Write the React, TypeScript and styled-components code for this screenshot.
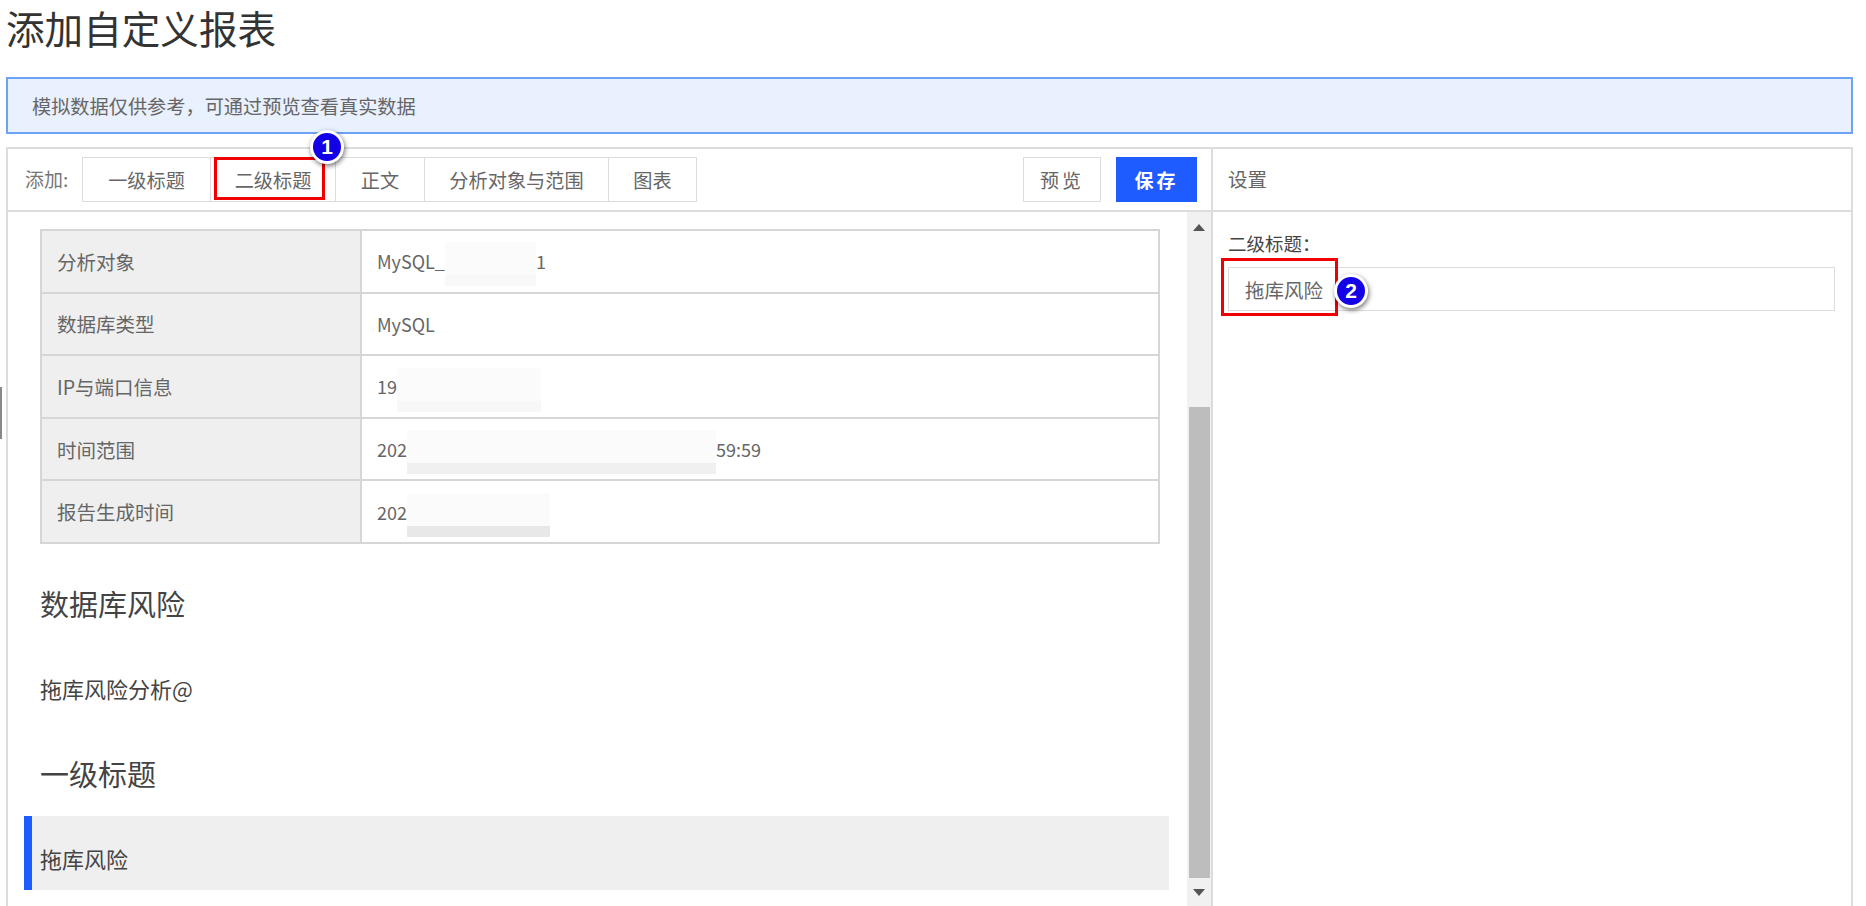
import styled, { createGlobalStyle } from "styled-components";

const GlobalStyle = createGlobalStyle`
  html, body {
    margin: 0;
    height: 906px;
    overflow: hidden;
    background: #fff;
    font-family: "Noto Sans CJK SC", "Noto Sans", sans-serif;
    color: #666;
  }
  * { box-sizing: border-box; }
`;

const Page = styled.div`
  position: relative;
  height: 906px;
  padding: 0 13px 0 6px;
  display: flex;
  flex-direction: column;
`;

const EdgeHandle = styled.div`
  position: absolute;
  left: 0;
  top: 387px;
  width: 2px;
  height: 52px;
  background: #888;
`;

const Title = styled.h1`
  margin: 0;
  height: 77px;
  padding-top: 1px;
  font-size: 38.6px;
  line-height: 52px;
  font-weight: 400;
  color: #333;
`;

const Notice = styled.div`
  height: 57px;
  padding-left: 24px;
  display: flex;
  align-items: center;
  background: #e9f0fe;
  border: 2px solid #6ea2f5;
  font-size: 19.2px;
  color: #666;
`;

const Panel = styled.div`
  margin-top: 13px;
  flex: 1;
  min-height: 0;
  display: grid;
  grid-template-columns: 1205px 1fr;
  border: 2px solid #dcdcdc;
  border-bottom: none;
`;

const Editor = styled.section`
  display: flex;
  flex-direction: column;
  min-height: 0;
  border-right: 2px solid #dcdcdc;
`;

const Toolbar = styled.div`
  height: 63px;
  flex: none;
  padding: 8px 14px 0 17px;
  display: flex;
  align-items: flex-start;
  border-bottom: 2px solid #dcdcdc;
`;

const AddLabel = styled.span`
  width: 57px;
  height: 45px;
  line-height: 44px;
  font-size: 19px;
  color: #777;
`;

const AddGroup = styled.div`
  display: flex;
  height: 45px;
  border: 1.5px solid #dcdcdc;
`;

const AddButton = styled.div<{ $width: number }>`
  position: relative;
  width: ${(p) => p.$width}px;
  display: flex;
  align-items: center;
  justify-content: center;
  font-size: 19.2px;
  color: #666;
  &:not(:last-child) {
    border-right: 1.5px solid #dcdcdc;
  }
`;

const RedBox = styled.div<{ $top: number; $left: number; $width: number; $height: number }>`
  position: absolute;
  top: ${(p) => p.$top}px;
  left: ${(p) => p.$left}px;
  width: ${(p) => p.$width}px;
  height: ${(p) => p.$height}px;
  border: 3px solid #f00000;
  pointer-events: none;
`;

const Badge = styled.span<{ $top: number; $left: number }>`
  position: absolute;
  top: ${(p) => p.$top}px;
  left: ${(p) => p.$left}px;
  width: 34px;
  height: 34px;
  display: flex;
  align-items: center;
  justify-content: center;
  border-radius: 50%;
  border: 3px solid #fff;
  background: #1400e6;
  box-shadow: 1px 2px 5px rgba(0, 0, 0, 0.55);
  font-family: "Liberation Sans", sans-serif;
  font-size: 21px;
  font-weight: 700;
  color: #fff;
  z-index: 2;
`;

const Actions = styled.div`
  margin-left: auto;
  display: flex;
  gap: 15px;
`;

const ActionButton = styled.div<{ $primary?: boolean }>`
  width: ${(p) => (p.$primary ? 81 : 78)}px;
  height: 45px;
  display: flex;
  align-items: center;
  justify-content: center;
  font-size: 19px;
  letter-spacing: 3px;
  font-weight: ${(p) => (p.$primary ? 700 : 400)};
  color: ${(p) => (p.$primary ? "#fff" : "#666")};
  background: ${(p) => (p.$primary ? "#1f5cff" : "#fff")};
  border: ${(p) => (p.$primary ? "none" : "1.5px solid #dcdcdc")};
`;

const EditorBody = styled.div`
  flex: 1;
  min-height: 0;
  display: flex;
`;

const Content = styled.div`
  flex: 1;
  min-width: 0;
  padding: 17px 18px 0 16px;
`;

const InfoTable = styled.table`
  width: 1120px;
  margin-left: 16px;
  border-collapse: collapse;
  font-size: 18px;
  border: 2px solid #d6d6d6;
  tr { height: 62.6px; }
  td {
    border: 2px solid #d6d6d6;
    padding: 0 15px;
  }
`;

const KeyCell = styled.td`
  width: 320px;
  background: #efefef;
  color: #666;
  font-size: 19.5px;
`;

// the reference has these parts of the values blurred out
const Mask = styled.span<{ $width: number; $shade?: string }>`
  display: inline-block;
  vertical-align: middle;
  width: ${(p) => p.$width}px;
  height: 44px;
  margin: -12px 0;
  background: linear-gradient(
    to bottom,
    #fbfbfb 0,
    #fbfbfb 74%,
    ${(p) => p.$shade ?? "#f6f6f6"} 74%,
    ${(p) => p.$shade ?? "#f6f6f6"} 100%
  );
`;

const Heading = styled.h2<{ $top: number }>`
  margin: ${(p) => p.$top}px 0 0 16px;
  font-size: 29px;
  line-height: 40px;
  font-weight: 400;
  color: #444;
`;

const BodyText = styled.p`
  margin: 50px 0 0 16px;
  font-size: 22px;
  line-height: 30px;
  color: #444;
`;

const SelectedRow = styled.div`
  margin-top: 23px;
  height: 74px;
  padding: 25px 0 0 8px;
  background: #efefef;
  border-left: 8px solid #1f5cff;
  font-size: 22px;
  line-height: 34px;
  color: #444;
`;

const Scrollbar = styled.div`
  width: 24px;
  flex: none;
  display: flex;
  flex-direction: column;
  align-items: center;
  background: #f1f1f1;
`;

const ScrollArrow = styled.svg<{ $top?: number }>`
  width: 12px;
  height: 7px;
  flex: none;
  margin-top: ${(p) => p.$top ?? 0}px;
  fill: #555;
`;

const ScrollThumb = styled.div`
  width: 21px;
  height: 471px;
  margin: 176px 0 11px;
  background: #bdbdbd;
`;

const Settings = styled.aside`
  min-width: 0;
`;

const SettingsHeader = styled.div`
  height: 63px;
  padding: 0 0 2px 15px;
  display: flex;
  align-items: center;
  border-bottom: 2px solid #dcdcdc;
  font-size: 19.5px;
  color: #666;
`;

const SettingsBody = styled.div`
  padding: 18px 16px 0 15px;
`;

const FieldLabel = styled.div`
  height: 26px;
  font-size: 18.5px;
  line-height: 26px;
  color: #444;
`;

const Field = styled.div`
  position: relative;
  margin-top: 11px;
  height: 44px;
  padding-left: 16px;
  display: flex;
  align-items: center;
  border: 1.5px solid #dcdcdc;
  font-size: 19.5px;
  color: #666;
`;

function ArrowUp() {
  return (
    <ScrollArrow viewBox="0 0 12 7" $top={12}>
      <path d="M6 0 12 7H0z" />
    </ScrollArrow>
  );
}

function ArrowDown() {
  return (
    <ScrollArrow viewBox="0 0 12 7">
      <path d="M0 0h12L6 7z" />
    </ScrollArrow>
  );
}

export default function App() {
  return (
    <Page>
      <GlobalStyle />
      <EdgeHandle />
      <Title>添加自定义报表</Title>
      <Notice>模拟数据仅供参考，可通过预览查看真实数据</Notice>
      <Panel>
        <Editor>
          <Toolbar>
            <AddLabel>添加:</AddLabel>
            <AddGroup>
              <AddButton $width={128}>一级标题</AddButton>
              <AddButton $width={125}>
                二级标题
                <RedBox $top={-1} $left={3} $width={111} $height={43} />
                <Badge $top={-28} $left={99}>1</Badge>
              </AddButton>
              <AddButton $width={89}>正文</AddButton>
              <AddButton $width={184}>分析对象与范围</AddButton>
              <AddButton $width={87}>图表</AddButton>
            </AddGroup>
            <Actions>
              <ActionButton>预览</ActionButton>
              <ActionButton $primary>保存</ActionButton>
            </Actions>
          </Toolbar>
          <EditorBody>
            <Content>
              <InfoTable>
                <tbody>
                  <tr>
                    <KeyCell>分析对象</KeyCell>
                    <td>MySQL_<Mask $width={91} $shade="#f8f8f8" />1</td>
                  </tr>
                  <tr>
                    <KeyCell>数据库类型</KeyCell>
                    <td>MySQL</td>
                  </tr>
                  <tr>
                    <KeyCell>IP与端口信息</KeyCell>
                    <td>19<Mask $width={144} $shade="#f7f7f7" /></td>
                  </tr>
                  <tr>
                    <KeyCell>时间范围</KeyCell>
                    <td>202<Mask $width={309} $shade="#f0f0f0" />59:59</td>
                  </tr>
                  <tr>
                    <KeyCell>报告生成时间</KeyCell>
                    <td>202<Mask $width={143} $shade="#e8e8e8" /></td>
                  </tr>
                </tbody>
              </InfoTable>
              <Heading $top={39}>数据库风险</Heading>
              <BodyText>拖库风险分析@</BodyText>
              <Heading $top={50}>一级标题</Heading>
              <SelectedRow>拖库风险</SelectedRow>
            </Content>
            <Scrollbar>
              <ArrowUp />
              <ScrollThumb />
              <ArrowDown />
            </Scrollbar>
          </EditorBody>
        </Editor>
        <Settings>
          <SettingsHeader>设置</SettingsHeader>
          <SettingsBody>
            <FieldLabel>二级标题：</FieldLabel>
            <Field>
              拖库风险
              <RedBox $top={-10} $left={-8} $width={117} $height={58} />
              <Badge $top={6} $left={105}>2</Badge>
            </Field>
          </SettingsBody>
        </Settings>
      </Panel>
    </Page>
  );
}
